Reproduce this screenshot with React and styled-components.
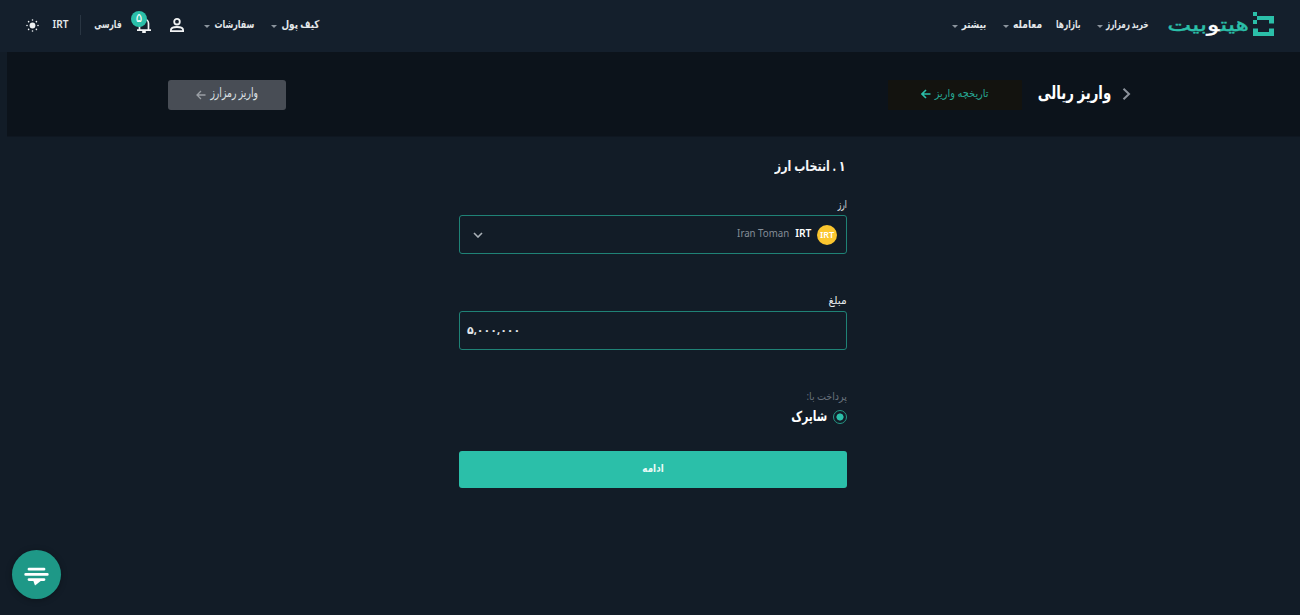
import React from "react";
import styled, { createGlobalStyle } from "styled-components";

const teal = "#2bbfa9";

const Global = createGlobalStyle`
  * { box-sizing: border-box; }
  html, body { margin: 0; background: #121c27; overflow: hidden; }
  body { font-family: "Noto Sans", "DejaVu Sans", sans-serif; color: #e6e9ec; }
`;

const Page = styled.div`
  direction: rtl;
  width: 1300px;
  height: 615px;
  background: #121c27;
`;

const Label = styled.span`
  display: flex;
  justify-content: flex-start;
  flex: none;
  width: ${(p) => p.$w}px;
  height: 20px;
  line-height: ${(p) => p.$line || 18}px;
  white-space: nowrap;
  font-size: ${(p) => p.$size || 11}px;
  font-weight: ${(p) => p.$weight || 400};
  color: ${(p) => p.$color || "#e3e7ea"};
  & > span {
    flex: none;
    transform: scaleX(${(p) => p.$stretch || 1});
    transform-origin: right center;
  }
`;

const Text = ({ children, ...rest }) => (
  <Label {...rest}>
    <span>{children}</span>
  </Label>
);

const Header = styled.header`
  height: 52px;
  display: flex;
  justify-content: space-between;
  padding: 0 26px;
  background: #141f2c;
`;

const Group = styled.div`
  display: flex;
  align-items: center;
  height: 50px;
`;

const Logo = styled.a`
  display: flex;
  align-items: center;
  gap: 4px;
  width: 107px;
  margin-left: 18px;
  padding-bottom: 2px;
`;

const Wordmark = styled.span`
  flex: none;
  width: 82px;
  height: 28px;
  line-height: 29px;
  font-family: "DejaVu Sans", sans-serif;
  font-size: 19px;
  color: ${teal};
  white-space: nowrap;
  -webkit-text-stroke: 0.4px currentColor;
  & > span {
    display: inline-block;
    transform: scaleX(1.34);
    transform-origin: right center;
  }
  b { color: #fff; font-weight: inherit; }
`;

const NavItem = styled.a`
  display: flex;
  align-items: center;
  gap: 4px;
  margin-left: ${(p) => p.$after || 0}px;
`;

const Caret = styled.i`
  width: 6px;
  height: 3px;
  margin-top: 3px;
  background: #8b949d;
  clip-path: polygon(0 0, 100% 0, 50% 100%);
`;

const IconSlot = styled.span`
  position: relative;
  display: flex;
  flex: none;
  margin-left: ${(p) => p.$after || 0}px;
  svg { display: block; }
`;

const Badge = styled.span`
  position: absolute;
  left: -6px;
  top: -6px;
  width: 16px;
  height: 16px;
  border-radius: 50%;
  background: ${teal};
  color: #fff;
  font-size: 12px;
  line-height: 14px;
  text-align: center;
`;

const Divider = styled.i`
  width: 1px;
  height: 20px;
  margin-left: 12px;
  background: #293542;
`;

const Band = styled.section`
  height: 85px;
  margin-left: 7px;
  padding: 28px 169px 0 161px;
  display: flex;
  justify-content: space-between;
  align-items: flex-start;
  background: #0c131b;
  border-bottom: 1px solid #0f1721;
`;

const TitleRow = styled.div`
  display: flex;
  align-items: center;
  height: 29px;
`;

const BandButton = styled.button`
  direction: rtl;
  display: flex;
  align-items: center;
  justify-content: center;
  gap: ${(p) => p.$gap}px;
  width: ${(p) => p.$w}px;
  height: 30px;
  padding: 0 0 2px;
  border: 0;
  border-radius: ${(p) => (p.$solid ? 3 : 1)}px;
  background: ${(p) => (p.$solid ? "#484d55" : "#13130f")};
  font-family: inherit;
  svg { margin-top: 1px; }
`;

const Form = styled.main`
  width: 388px;
  margin: 20px 453px 0 auto;
  display: flex;
  flex-direction: column;
`;

const Heading = styled.h1`
  margin: 0 0 18px;
  padding-right: 1px;
`;

const Field = styled.div`
  display: flex;
  align-items: center;
  height: 39px;
  border: 1px solid #1f8276;
  border-radius: 3px;
  direction: ${(p) => p.$dir || "rtl"};
  padding: ${(p) => p.$pad};
  margin-bottom: ${(p) => p.$after}px;
`;

const Coin = styled.span`
  display: flex;
  flex: none;
  align-items: center;
  justify-content: center;
  width: 20px;
  height: 20px;
  border-radius: 50%;
  background: #fbc62f;
  color: #fff;
  font-size: 9px;
  font-weight: 600;
  margin-left: 6px;
`;

const Push = styled.span`
  flex: 1;
`;

const RadioRow = styled.label`
  display: flex;
  align-items: center;
  gap: 6px;
  height: 20px;
`;

const Radio = styled.span`
  width: 14px;
  height: 14px;
  border: 1px solid #259885;
  border-radius: 50%;
  background: radial-gradient(circle, ${teal} 3.2px, transparent 3.9px);
`;

const Submit = styled.button`
  display: flex;
  justify-content: center;
  height: 37px;
  margin-top: 24px;
  padding: 8px 0 0;
  border: 0;
  border-radius: 3px;
  background: ${teal};
  font-family: inherit;
`;

const Chat = styled.button`
  position: absolute;
  left: 12px;
  top: 550px;
  width: 49px;
  height: 49px;
  padding: 0;
  border: 0;
  border-radius: 50%;
  background: #1e9887;
  box-shadow: 0 1px 6px rgba(0, 0, 0, 0.3);
  svg { display: block; }
`;

const LogoMark = () => (
  <svg width="21" height="24" viewBox="0 0 21 24" fill={teal}>
    <path d="M0 0h4v4H0zM4 4h17v7.500h-5V8H4zM0 8h4v4H0zM0 16.500h5V20h11v-3.500h5V24H0z" />
  </svg>
);

const Arrow = ({ color, w = 1.3 }) => (
  <svg width="10" height="10" viewBox="0 0 10 10" fill="none" stroke={color} strokeWidth={w}>
    <path d="M9.5 5H1M5 1 1 5l4 4" />
  </svg>
);

const Nav = ({ children, caret = true, after, ...t }) => (
  <NavItem $after={after}>
    <Text $weight={600} {...t}>{children}</Text>
    {caret && <Caret />}
  </NavItem>
);

export default function App() {
  return (
    <Page>
      <Global />
      <Header>
        <Group>
          <Logo>
            <LogoMark />
            <Wordmark><span>هیت<b>و</b>بیت</span></Wordmark>
          </Logo>
          <Nav $w={42} $stretch={0.66} after={17}>خرید رمزارز</Nav>
          <Nav $w={25} $stretch={0.67} caret={false} after={13}>بازارها</Nav>
          <Nav $w={29} $stretch={0.83} after={17}>معامله</Nav>
          <Nav $w={24} $stretch={0.78}>بیشتر</Nav>
        </Group>
        <Group>
          <Nav $w={38} $stretch={0.8} after={17}>کیف پول</Nav>
          <Nav $w={40} $stretch={0.72} after={20}>سفارشات</Nav>
          <IconSlot $after={19}>
            <svg width="14" height="14" viewBox="0 0 14 14" fill="none" stroke="#f2f4f5" strokeWidth="1.8">
              <circle cx="7" cy="3.7" r="2.8" />
              <path d="M.9 13.100v-1.200c0-1.900 3.100-2.900 6.100-2.900s6.100 1 6.100 2.900v1.200z" />
            </svg>
          </IconSlot>
          <IconSlot $after={15}>
            <svg width="14" height="16" viewBox="0 0 14 16" fill="none" stroke="#f2f4f5" strokeWidth="1.7">
              <path d="M0 13.200h14M2.500 13V6.500a4.500 4.500 0 0 1 9 0V13" />
              <path d="M5.200 15h3.600" strokeWidth="2" />
            </svg>
            <Badge>۵</Badge>
          </IconSlot>
          <NavItem $after={14}><Text $w={27} $weight={600} $stretch={0.69}>فارسی</Text></NavItem>
          <Divider />
          <NavItem $after={13}><Text $w={16} $weight={600} $stretch={0.92}>IRT</Text></NavItem>
          <IconSlot>
            <svg width="13" height="13" viewBox="0 0 13 13" fill="#eef1f3">
              <circle cx="6.5" cy="6.5" r="2.9" />
              {[0, 45, 90, 135, 180, 225, 270, 315].map((a) => (
                <circle key={a} cx="6.5" cy="1" r=".8" transform={`rotate(${a} 6.5 6.5)`} />
              ))}
            </svg>
          </IconSlot>
        </Group>
      </Header>

      <Band>
        <TitleRow>
          <NavItem $after={11}>
            <svg width="9" height="13" viewBox="0 0 9 13" fill="none" stroke="#8c929b" strokeWidth="2">
              <path d="M1.500.8 7 6l-5.500 5.200" />
            </svg>
          </NavItem>
          <NavItem $after={16}><Text $w={73} $size={18} $line={15} $weight={700} $color="#fff" $stretch={0.74}>واریز ریالی</Text></NavItem>
          <BandButton $w={134} $gap={4}>
            <Text $w={54} $size={11} $line={17} $color="#27a995" $stretch={0.89}>تاریخچه واریز</Text>
            <Arrow color={teal} w={1.6} />
          </BandButton>
        </TitleRow>
        <BandButton $w={118} $gap={5} $solid>
          <Text $w={47} $size={13} $line={17} $color="#dfe2e5" $stretch={0.71}>واریز رمزارز</Text>
          <Arrow color="#9a9fa5" />
        </BandButton>
      </Band>

      <Form>
        <Heading><Text $w={73} $size={14} $weight={700} $color="#f5f6f7" $stretch={0.79}>۱ . انتخاب ارز</Text></Heading>
        <Text $w={10} $size={11} $stretch={0.66}>ارز</Text>
        <Field $pad="0 9px 0 13px" $after={37}>
          <Coin>IRT</Coin>
          <Text $w={16} $size={11} $line={15} $weight={600} $color="#fff" $stretch={0.93}>IRT</Text>
          <NavItem $after={6} />
          <Text $w={52} $size={11} $line={15} $color="#858e98" $stretch={0.88}>Iran Toman</Text>
          <Push />
          <svg width="10" height="6" viewBox="0 0 10 6" fill="none" stroke="#a9b0b7" strokeWidth="1.6">
            <path d="m1 1 4 4 4-4" />
          </svg>
        </Field>
        <Text $w={19} $size={11} $stretch={0.97}>مبلغ</Text>
        <Field $dir="ltr" $pad="0 7px" $after={37}>
          <Text $w={52} $size={11} $weight={700} $line={17}>۵,۰۰۰,۰۰۰</Text>
        </Field>
        <Text $w={40} $size={11} $color="#68717b" $stretch={0.86}>پرداخت با:</Text>
        <RadioRow>
          <Radio />
          <Text $w={37} $size={14} $weight={700} $color="#fff" $stretch={0.76}>شاپرک</Text>
        </RadioRow>
        <Submit><Text $w={22} $weight={700} $color="#eafaf7" $stretch={0.8}>ادامه</Text></Submit>
      </Form>

      <Chat>
        <svg width="49" height="49" viewBox="0 0 49 49" fill="none" stroke="#fff" strokeWidth="2.8" strokeLinecap="round">
          <path d="M17 19.200h15M13.700 24.400h21.600M17 29.600h15" />
          <path d="M21 30h9l-7 5.500z" fill="#fff" stroke="none" />
        </svg>
      </Chat>
    </Page>
  );
}
